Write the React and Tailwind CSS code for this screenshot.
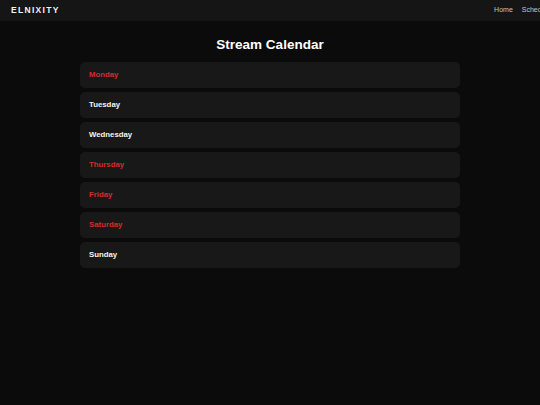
const days = [
  { name: 'Monday', live: true },
  { name: 'Tuesday', live: false },
  { name: 'Wednesday', live: false },
  { name: 'Thursday', live: true },
  { name: 'Friday', live: true },
  { name: 'Saturday', live: true },
  { name: 'Sunday', live: false },
];

export default function App() {
  return (
    <div className="min-h-[405px] w-[540px] overflow-hidden bg-[#0b0b0b] font-['Liberation_Sans',Arial,sans-serif]">
      <header className="h-[21px] bg-[#151515] flex items-center justify-between pl-[11px]">
        <span className="text-[8.5px] font-bold tracking-[1.3px] text-[#f2f2f2]">ELNIXITY</span>
        <nav className="flex gap-[9px] text-[7px] text-[#c4c4c4] whitespace-nowrap -mr-[11px]">
          <span>Home</span>
          <span>Schedule</span>
        </nav>
      </header>

      <main className="w-[380px] mx-auto pt-[15px]">
        <h1 className="text-center text-[13.5px] leading-[17px] font-bold text-white mb-[9px]">Stream Calendar</h1>
        <div className="flex flex-col gap-[4px]">
          {days.map((day) => (
            <div key={day.name} className="h-[26px] rounded-[5px] bg-[#181818] flex items-center px-[9px]">
              <span className={`text-[7.8px] font-bold ${day.live ? 'text-[#d42c2c]' : 'text-[#f4f4f4]'}`}>
                {day.name}
              </span>
            </div>
          ))}
        </div>
      </main>
    </div>
  );
}
